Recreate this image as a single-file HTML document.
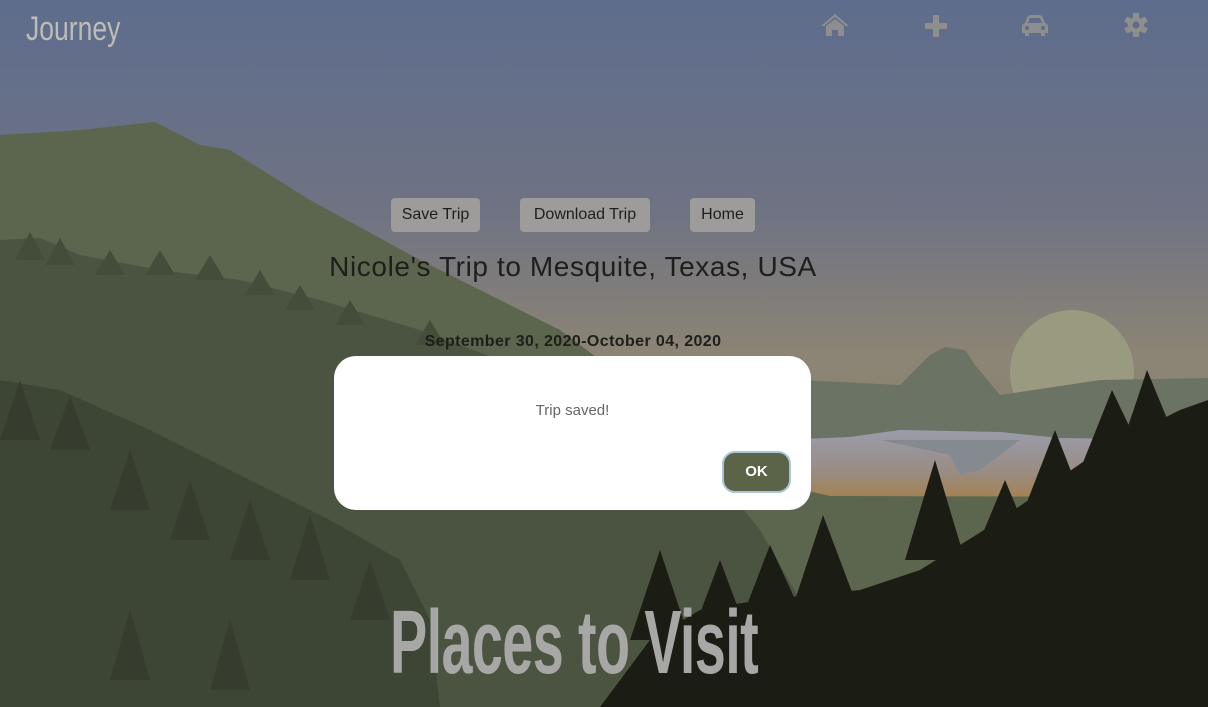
<!DOCTYPE html>
<html><head><meta charset="utf-8"><style>
*{margin:0;padding:0;box-sizing:border-box}
body{width:1208px;height:707px;overflow:hidden;position:relative;font-family:"Liberation Sans",sans-serif;background:#5f6e8c}
svg.bg{position:absolute;left:0;top:0}
.logo{position:absolute;left:26px;top:10px;font-family:"Liberation Sans",sans-serif;font-size:34px;color:#bdbdb8;transform:scaleX(.78);transform-origin:left}
.nav{position:absolute;top:12px}
.btn{position:absolute;top:198px;height:34px;background:#9d9c9a;border-radius:4px;font-size:16px;color:#1e1e1e;line-height:34px;text-align:center}
.title{position:absolute;left:0;width:1146px;text-align:center;top:251px;font-size:28px;letter-spacing:.6px;color:#1e1e1a}
.date{position:absolute;left:0;width:1146px;text-align:center;top:333px;font-size:16px;letter-spacing:.4px;font-weight:bold;color:#1e1e1a}
.modal{position:absolute;left:334px;top:356px;width:477px;height:154px;background:#fff;border-radius:22px}
.msg{position:absolute;left:0;width:100%;top:46px;text-align:center;color:#666;font-size:15px}
.ok{position:absolute;left:388px;top:95px;width:69px;height:42px;background:#5b6448;border-radius:13px;border:2px solid #a9c5d6;color:#fff;font-weight:bold;font-size:15px;text-align:center;line-height:38px}
.places{position:absolute;left:390px;top:592px;font-size:90px;font-weight:bold;color:#a7a7a5;font-family:"Liberation Sans",sans-serif;transform:scaleX(.62);transform-origin:left;letter-spacing:-1px;white-space:nowrap}
</style></head><body>
<svg class="bg" width="1208" height="707" viewBox="0 0 1208 707">
<defs>
<linearGradient id="sky" x1="0" y1="0" x2="0" y2="1">
<stop offset="0" stop-color="#5e6d8d"/><stop offset=".3" stop-color="#6f7383"/><stop offset=".5" stop-color="#8c8474"/><stop offset=".7" stop-color="#8e8470"/><stop offset="1" stop-color="#8a7e68"/></linearGradient>
<linearGradient id="mist" x1="0" y1="0" x2="0" y2="1">
<stop offset="0" stop-color="#9a9cac"/><stop offset=".6" stop-color="#9a8c82"/><stop offset="1" stop-color="#a5804e"/></linearGradient>
</defs>
<rect width="1208" height="707" fill="url(#sky)"/>
<circle cx="1072" cy="372" r="62" fill="#9a9a80"/>
<polygon points="800,380 900,385 930,355 945,347 965,350 975,365 1000,395 1100,380 1208,378 1208,450 800,450" fill="#6b7464"/>
<polygon points="780,440 850,437 900,430 1000,432 1060,438 1208,440 1208,500 780,500" fill="url(#mist)"/>
<polygon points="880,440 950,455 960,475 980,470 1020,440" fill="#858a90"/>
<polygon points="0,135 80,130 155,122 200,145 230,150 310,200 420,260 560,330 680,420 760,480 830,496 1208,497 1208,707 0,707" fill="#5c664e"/>
<polygon points="0,240 40,238 80,255 160,270 240,280 320,300 420,330 500,360 560,380 640,420 720,480 760,530 800,600 820,707 0,707" fill="#4b5441"/>
<polygon points="0,380 60,390 150,430 250,480 330,520 400,560 430,620 440,707 0,707" fill="#3d4535"/>
<polygon points="600,707 650,640 700,610 760,600 860,590 920,570 1000,520 1100,450 1180,410 1208,400 1208,707" fill="#1b1d14"/>
<g fill="#1b1d14">
<polygon points="935,460 905,560 965,560"/><polygon points="1055,430 1020,520 1090,520"/><polygon points="1112,390 1080,470 1150,470"/><polygon points="1147,370 1120,450 1180,450"/><polygon points="823,515 795,600 855,600"/><polygon points="770,545 745,610 800,610"/><polygon points="720,560 690,640 750,640"/><polygon points="660,550 630,640 690,640"/><polygon points="1005,480 980,540 1030,540"/>
</g>
<g fill="#444c3a">
<polygon points="30,232 15,260 45,260"/><polygon points="60,238 45,265 75,265"/><polygon points="110,250 95,275 125,275"/><polygon points="160,250 145,275 175,275"/><polygon points="210,255 195,280 225,280"/><polygon points="260,270 245,295 275,295"/><polygon points="300,285 285,310 315,310"/><polygon points="350,300 335,325 365,325"/><polygon points="430,320 415,345 445,345"/>
</g>
<g fill="#363d2e">
<polygon points="20,380 0,440 40,440"/><polygon points="70,395 50,450 90,450"/><polygon points="130,450 110,510 150,510"/><polygon points="190,480 170,540 210,540"/><polygon points="250,500 230,560 270,560"/><polygon points="310,515 290,580 330,580"/><polygon points="370,560 350,620 390,620"/><polygon points="130,610 110,680 150,680"/><polygon points="230,620 210,690 250,690"/>
</g>
</svg>
<div class="logo">Journey</div>
<svg class="nav" style="left:820px" width="30" height="26" viewBox="0 0 30 26"><path d="M15 2 L1 14 L4 14 L15 5 L26 14 L29 14 Z M6 14 L6 24 L12 24 L12 18 L18 18 L18 24 L24 24 L24 14 L15 7 Z" fill="#8e8e8e"/></svg>
<svg class="nav" style="left:924px" width="24" height="26" viewBox="0 0 24 26"><path d="M9 3h6v8h8v6h-8v8H9v-8H1v-6h8z" fill="#8e8e8e"/></svg>
<svg class="nav" style="left:1021px" width="28" height="26" viewBox="0 0 28 26"><path d="M6 6 Q7 3 10 3 H18 Q21 3 22 6 L24 11 Q27 12 27 15 V21 H24 V24 H20 V21 H8 V24 H4 V21 H1 V15 Q1 12 4 11 Z M7 11 H21 L19 6 H9 Z" fill="#8e8e8e"/><circle cx="6" cy="16" r="2" fill="#5f6d8b"/><circle cx="22" cy="16" r="2" fill="#5f6d8b"/></svg>
<svg class="nav" style="left:1123px" width="26" height="26" viewBox="0 0 26 26"><g fill="#8e8e8e" transform="translate(13 13)"><circle r="8"/><rect x="-3" y="-12" width="6" height="24" rx="1"/><rect x="-3" y="-12" width="6" height="24" rx="1" transform="rotate(60)"/><rect x="-3" y="-12" width="6" height="24" rx="1" transform="rotate(120)"/></g><circle cx="13" cy="13" r="3.5" fill="#5f6d8b"/></svg>
<div class="btn" style="left:391px;width:89px">Save Trip</div>
<div class="btn" style="left:520px;width:130px">Download Trip</div>
<div class="btn" style="left:690px;width:65px">Home</div>
<div class="title">Nicole's Trip to Mesquite, Texas, USA</div>
<div class="date">September 30, 2020-October 04, 2020</div>
<div class="places">Places to Visit</div>
<div class="modal"><div class="msg">Trip saved!</div><div class="ok">OK</div></div>
</body></html>
